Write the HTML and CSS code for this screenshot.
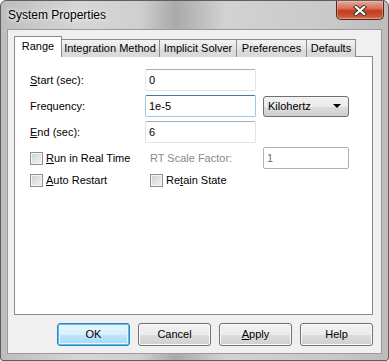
FILE: index.html
```html
<!DOCTYPE html>
<html lang="en">
<head>
    <meta charset="UTF-8">
    <title>System Properties</title>
    <link rel="stylesheet" href="styles.css">
</head>
<body>
    <div class="ventana">
        <div class="titulo">
            <span class="titulo-texto">System Properties</span>
            <span class="cerrar">
                <svg width="14" height="11" viewBox="0 0 14 11">
                    <path d="M3 2 L11 9 M11 2 L3 9" stroke="#3b3b3b" stroke-width="4.2" stroke-linecap="square"/>
                    <path d="M3 2 L11 9 M11 2 L3 9" stroke="#ffffff" stroke-width="2.2" stroke-linecap="square"/>
                </svg>
            </span>
        </div>

        <div class="cliente">
            <!-- Pestañas -->
            <div class="pestanas">
                <div class="pestana activa">Range</div>
                <div class="pestana integracion">Integration Method</div>
                <div class="pestana implicito">Implicit Solver</div>
                <div class="pestana preferencias">Preferences</div>
                <div class="pestana defaults">Defaults</div>
            </div>

            <div class="panel">
                <div class="fila">
                    <label class="etiqueta"><u>S</u>tart (sec):</label>
                    <div class="texto">0</div>
                </div>
                <div class="fila">
                    <label class="etiqueta">Frequency:</label>
                    <div class="texto foco">1e-5</div>
                    <div class="combo">Kilohertz <span class="flecha"></span></div>
                </div>
                <div class="fila">
                    <label class="etiqueta"><u>E</u>nd (sec):</label>
                    <div class="texto">6</div>
                </div>

                <div class="opciones">
                    <div class="opcion">
                        <span class="check"></span><span><u>R</u>un in Real Time</span>
                    </div>
                    <div class="opcion gris">RT Scale Factor:</div>
                    <div class="texto chico deshabilitado">1</div>
                </div>
                <div class="opciones">
                    <div class="opcion">
                        <span class="check"></span><span><u>A</u>uto Restart</span>
                    </div>
                    <div class="opcion">
                        <span class="check"></span><span>Re<u>t</u>ain State</span>
                    </div>
                </div>
            </div>

            <div class="botones">
                <div class="boton defecto">OK</div>
                <div class="boton">Cancel</div>
                <div class="boton"><u>A</u>pply</div>
                <div class="boton">Help</div>
            </div>
        </div>
    </div>
</body>
</html>
```

FILE: styles.css
```css
body { margin: 0; font-family: "Liberation Sans", Arial, sans-serif; font-size: 11px; color: #000; }

.ventana {
    width: 389px;
    height: 361px;
    box-sizing: border-box;
    border: 1px solid #5e5e5e;
    border-radius: 6px 6px 3px 3px;
    background: linear-gradient(90deg, #bdbdbd 0%, #d6d6d6 20%, #cfcfcf 36%, #a9a9a9 45%, #d2d2d2 58%, #c9c9c9 85%, #bcbcbc 100%);
    display: flex;
    flex-direction: column;
    overflow: hidden;
}

.titulo {
    height: 28px;
    display: flex;
    justify-content: space-between;
    align-items: flex-start;
    padding: 0 4px 0 7px;
}

.titulo-texto {
    font-size: 12px;
    line-height: 28px;
    text-shadow: 0 0 6px #f4f4f4, 0 0 3px #f4f4f4;
}

.cerrar {
    width: 46px;
    height: 18px;
    border: 1px solid #4e2a22;
    border-top: none;
    border-radius: 0 0 5px 5px;
    background: linear-gradient(#e9a895 0%, #d8735a 40%, #c13d20 55%, #cb5332 85%, #dc7a5c 100%);
    display: flex;
    justify-content: center;
    align-items: center;
    box-shadow: inset 0 0 0 1px rgba(255, 220, 210, 0.35);
}

.cliente {
    flex: 1;
    margin: 0 6px 6px 6px;
    border: 1px solid #9b9b9b;
    background: #f0f0f0;
    padding: 7px 8px 0 6px;
    display: flex;
    flex-direction: column;
}

/* Pestañas */
.pestanas {
    display: flex;
    align-items: flex-end;
    height: 20px;
    position: relative;
    z-index: 1;
    margin-bottom: -1px;
}

.pestana {
    height: 18px;
    line-height: 17px;
    box-sizing: border-box;
    text-align: center;
    border: 1px solid #898c95;
    border-bottom: none;
    margin-left: -1px;
    background: linear-gradient(#f2f2f2, #e5e5e5 50%, #dcdcdc 51%, #d9d9d9);
}

.pestana.activa {
    width: 48px;
    height: 21px;
    line-height: 19px;
    margin-left: 0;
    margin-right: -1px;
    background: #fff;
    position: relative;
    z-index: 2;
}

.integracion { width: 100px; }
.implicito { width: 78px; }
.preferencias { width: 71px; }
.defaults { width: 50px; }

.panel {
    height: 259px;
    box-sizing: border-box;
    border: 1px solid #898c95;
    background: #fff;
    padding: 12px 0 0 15px;
}

.fila {
    display: flex;
    align-items: center;
    height: 22px;
    margin-bottom: 4px;
}

.etiqueta { width: 115px; }

.texto {
    width: 111px;
    height: 22px;
    box-sizing: border-box;
    border: 1px solid #e2e3ea;
    border-top-color: #abadb3;
    border-radius: 2px;
    padding: 0 3px;
    line-height: 20px;
}

.texto.foco {
    border-color: #a3c6e4;
    border-top-color: #3d7bad;
}

.texto.chico { width: 86px; }

.texto.deshabilitado {
    color: #6d6d6d;
    border-color: #adb2b5;
}

.combo {
    margin-left: 7px;
    width: 86px;
    height: 21px;
    box-sizing: border-box;
    border: 1px solid #707070;
    border-radius: 3px;
    background: linear-gradient(#f2f2f2, #ebebeb 50%, #dddddd 51%, #cfcfcf);
    padding: 0 7px 0 4px;
    display: flex;
    justify-content: space-between;
    align-items: center;
}

.flecha {
    width: 0;
    height: 0;
    border-left: 4px solid transparent;
    border-right: 4px solid transparent;
    border-top: 4px solid #000;
}

.opciones {
    display: flex;
    align-items: center;
    height: 22px;
}

.fila + .opciones { margin-top: 1px; }

.opcion {
    width: 120px;
    display: flex;
    align-items: center;
    gap: 3px;
}

.opcion + .opcion { width: 113px; }

.opcion.gris { color: #8a8a8a; }

.check {
    width: 13px;
    height: 13px;
    box-sizing: border-box;
    border: 1px solid #8e8f8f;
    background: linear-gradient(135deg, #d0d0d0, #f4f4f4);
    box-shadow: inset 0 0 0 1px #f4f4f4;
}

/* Botones */
.botones {
    display: flex;
    justify-content: flex-end;
    gap: 8px;
    margin-top: 8px;
}

.boton {
    width: 73px;
    height: 23px;
    box-sizing: border-box;
    border: 1px solid #707070;
    border-radius: 3px;
    background: linear-gradient(#f2f2f2, #ebebeb 50%, #dddddd 51%, #cfcfcf);
    box-shadow: inset 0 0 0 1px #fbfbfb;
    text-align: center;
    line-height: 21px;
}

.boton.defecto {
    border-color: #3c7fb1;
    background: linear-gradient(#eaf6fd, #d9f0fc 50%, #bee6fd 51%, #a7d9f5);
    box-shadow: inset 0 0 0 1px #48c4f5, inset 0 0 0 2px #e6f5fd;
}
```
